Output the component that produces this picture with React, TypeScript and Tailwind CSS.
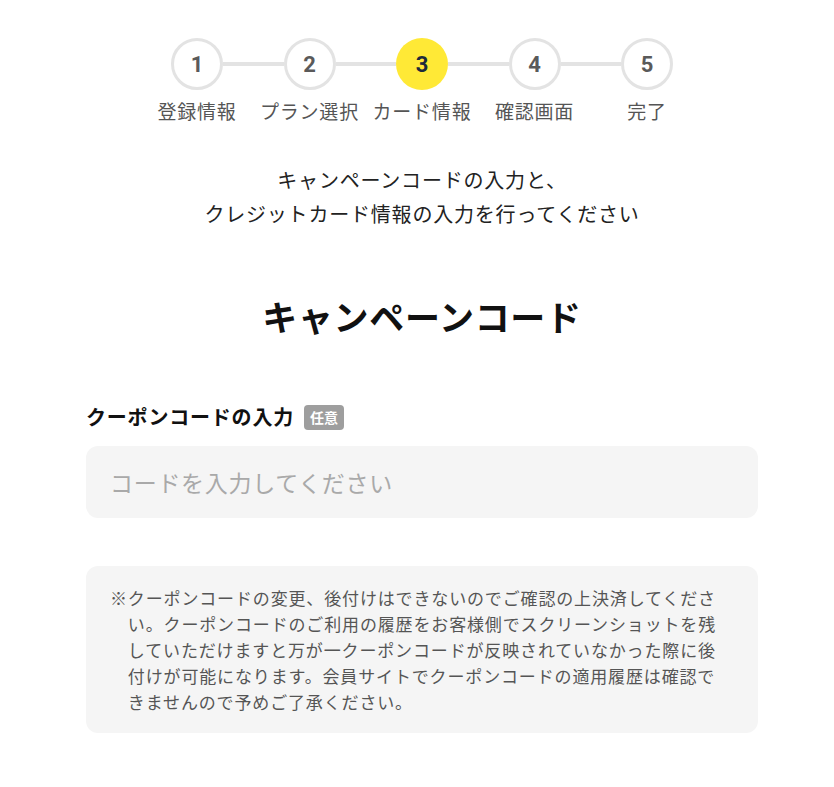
import React from "react";

const steps = ["登録情報", "プラン選択", "カード情報", "確認画面", "完了"];
const current = 3;

function Stepper() {
    return (
        <div className="flex flex-col items-center">
            <div className="flex items-center">
                {steps.map((s, i) => {
                    const n = i + 1;
                    const active = n === current;
                    return (
                        <React.Fragment key={s}>
                            {i > 0 && <div className="h-[4px] w-[60.5px] bg-[#e3e3e3]" />}
                            <div
                                className={
                                    active
                                        ? "flex h-[52px] w-[52px] items-center justify-center rounded-full bg-[#ffe936] font-['Roboto',sans-serif] text-[22px] font-bold text-[#1e2a3a]"
                                        : "flex h-[52px] w-[52px] items-center justify-center rounded-full border-[3px] border-[#e3e3e3] bg-white font-['Roboto',sans-serif] text-[22px] font-bold text-[#5a5a5a]"
                                }
                            >
                                {n}
                            </div>
                        </React.Fragment>
                    );
                })}
            </div>
            <div className="mt-[8px] grid grid-cols-5 w-[562.5px]">
                {steps.map((s) => (
                    <span
                        key={s}
                        className="text-center text-[19px] leading-[26px] tracking-[0.04em] text-[#555] whitespace-nowrap"
                    >
                        {s}
                    </span>
                ))}
            </div>
        </div>
    );
}

export default function App() {
    return (
        <div className="min-h-[787px] bg-white font-['Noto_Sans_CJK_JP','Noto_Sans',sans-serif]">
            <div className="ml-[86px] w-[672px] pt-[38px] pb-[40px]">
                <Stepper />

                <p className="mt-[39px] text-center text-[20px] leading-[34px] tracking-[0.04em] text-[#222]">
                    キャンペーンコードの入力と、
                    <br />
                    クレジットカード情報の入力を行ってください
                </p>

                <h2 className="mt-[61px] text-center text-[35px] font-bold leading-[48px] tracking-[0.02em] text-[#111]">
                    キャンペーンコード
                </h2>

                <div className="mt-[63px] flex items-center">
                    <span className="text-[20px] font-bold leading-[28px] tracking-[0.04em] text-[#111]">
                        クーポンコードの入力
                    </span>
                    <span className="ml-[10px] rounded-[4px] bg-[#9e9e9e] px-[6px] text-[14px] font-bold leading-[25px] text-white">
                        任意
                    </span>
                </div>

                <input
                    type="text"
                    placeholder="コードを入力してください"
                    className="mt-[15px] block h-[72px] w-full rounded-[12px] bg-[#f5f5f5] px-[24px] text-[23px] tracking-[0.03em] text-[#333] outline-none placeholder:text-[#a9a9a9]"
                />

                <div className="mt-[48px] rounded-[12px] bg-[#f5f5f5] pl-[24px] pr-[30px] pt-[19px] pb-[18px]">
                    <p className="pl-[1.05em] indent-[-1.05em] text-[17px] leading-[26px] tracking-[0.05em] text-[#555]">
                        ※クーポンコードの変更、後付けはできないのでご確認の上決済してください。クーポンコードのご利用の履歴をお客様側でスクリーンショットを残していただけますと万が一クーポンコードが反映されていなかった際に後付けが可能になります。会員サイトでクーポンコードの適用履歴は確認できませんので予めご了承ください。
                    </p>
                </div>
            </div>
        </div>
    );
}
